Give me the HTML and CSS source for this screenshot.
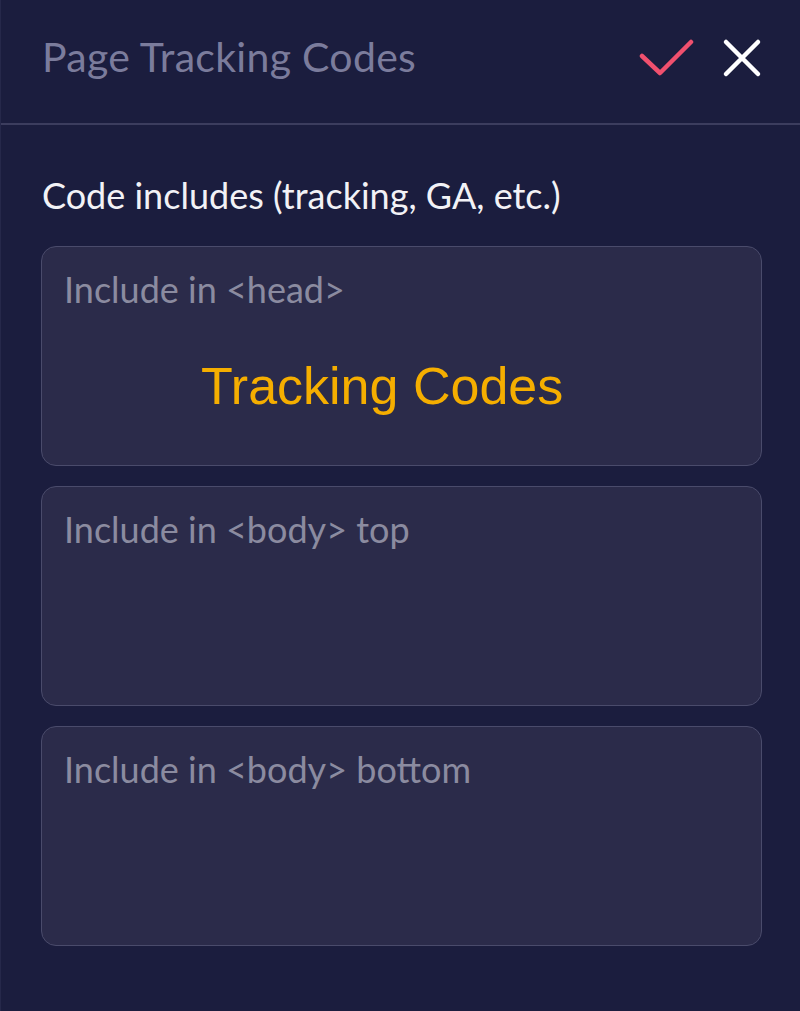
FILE: index.html
```html
<!DOCTYPE html>
<html>
<head>
<meta charset="utf-8">
<link rel="stylesheet" href="styles.css">
</head>
<body>
<div class="panel">
  <div class="header">
    <div class="title">Page Tracking Codes</div>
    <div class="actions">
      <svg class="icon" width="56" height="40" viewBox="0 0 56 40"><polyline points="4,18 22,35 53,4" fill="none" stroke="#f0506e" stroke-width="4.5" stroke-linecap="round" stroke-linejoin="round"/></svg>
      <svg class="icon" width="40" height="40" viewBox="0 0 40 40"><path d="M4 4 L36 36 M36 4 L4 36" fill="none" stroke="#ffffff" stroke-width="4.5" stroke-linecap="round"/></svg>
    </div>
  </div>
  <div class="content">
    <div class="label">Code includes (tracking, GA, etc.)</div>
    <div class="field">
      <div class="placeholder">Include in &lt;head&gt;</div>
      <div class="overlay">Tracking Codes</div>
    </div>
    <div class="field">
      <div class="placeholder">Include in &lt;body&gt; top</div>
    </div>
    <div class="field">
      <div class="placeholder">Include in &lt;body&gt; bottom</div>
    </div>
  </div>
</div>
</body>
</html>
```
FILE: styles.css
```css
html, body {
  margin: 0;
  padding: 0;
  background: #1b1d3e;
}
.panel {
  width: 800px;
  height: 1011px;
  background: #1b1d3e;
  font-family: Lato, "Open Sans", sans-serif;
  box-sizing: border-box;
  border-left: 1px solid #26284a;
}
.header {
  height: 123px;
  border-bottom: 2px solid #3c3d5e;
  display: flex;
  align-items: center;
  justify-content: space-between;
  padding: 0 38px 0 41px;
  box-sizing: content-box;
}
.title {
  font-size: 41px;
  color: #7b7c9c;
  letter-spacing: 0.3px;
  margin-top: -10px;
}
.actions {
  display: flex;
  align-items: center;
  gap: 28px;
  margin-top: -8px;
}
.icon {
  display: block;
}
.content {
  padding: 48px 38px 0 40px;
}
.label {
  font-size: 36px;
  color: #f2f2f6;
  line-height: 44px;
  margin-bottom: 29px;
  padding-left: 1px;
}
.field {
  position: relative;
  height: 220px;
  background: #2b2b4a;
  border: 1px solid #4a4b6b;
  border-radius: 15px;
  margin-bottom: 20px;
  padding: 20px 22px;
  box-sizing: border-box;
}
.placeholder {
  font-size: 36px;
  color: #8b8ba0;
  line-height: 44px;
}
.overlay {
  position: absolute;
  left: 159px;
  top: 109px;
  font-family: "Liberation Sans", Arial, sans-serif;
  font-size: 52px;
  color: #f5ae00;
  line-height: 60px;
}
```
